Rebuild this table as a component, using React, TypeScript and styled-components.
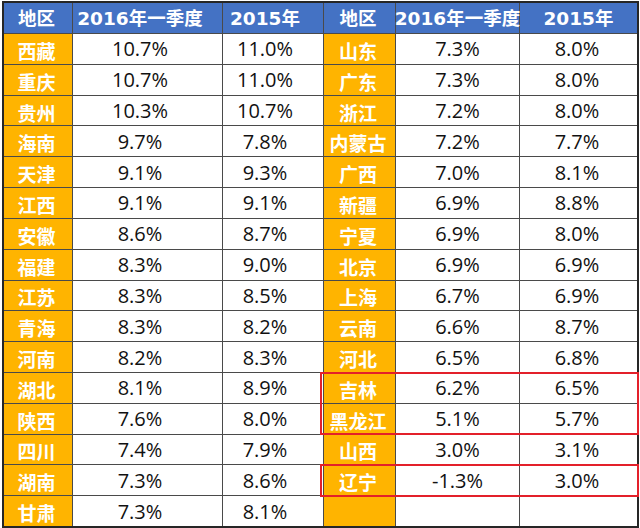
import React from "react";
import styled, { createGlobalStyle } from "styled-components";

const Global = createGlobalStyle`
  html, body { margin: 0; padding: 0; background: #ffffff; }
  body { width: 640px; height: 528px; overflow: hidden; }
`;

const Page = styled.div`
  padding: 1px 1px 0 2px;
`;

const Stack = styled.div`
  display: grid;
  width: max-content;
  & > * {
    grid-area: 1 / 1;
  }
`;

const Sheet = styled.div`
  display: grid;
  grid-template-columns: 68px 149px 100px 71px 123px 117px;
  grid-template-rows: 30px repeat(16, 1fr);
  gap: 1px;
  width: 633px;
  height: 523px;
  background: #4a4a4a;
  border: 2px solid #262626;
`;

const Marks = styled(Sheet)`
  background: transparent;
  border-color: transparent;
  pointer-events: none;
`;

const HeadCell = styled.div<{ $shift?: number }>`
  display: flex;
  align-items: center;
  justify-content: center;
  padding: 2px ${(p) => p.$shift ?? 0}px 0 0;
  background: #4472c4;
  color: #ffffff;
  font-family: "DejaVu Sans", "Noto Sans CJK SC", sans-serif;
  font-weight: 700;
  font-size: 18.5px;
  line-height: 1;
  white-space: nowrap;
`;

const RegionCell = styled.div<{ $shift?: number }>`
  display: flex;
  align-items: center;
  justify-content: center;
  padding: 3px ${(p) => p.$shift ?? 0}px 0 0;
  background: #ffb400;
  color: #ffffff;
  font-family: "Noto Sans CJK SC", sans-serif;
  font-weight: 700;
  font-size: 19px;
  line-height: 1;
  white-space: nowrap;
`;

const ValueCell = styled.div<{ $shift?: number }>`
  display: flex;
  align-items: center;
  justify-content: center;
  padding: 0 ${(p) => p.$shift ?? 0}px 0 0;
  background: #ffffff;
  color: #111111;
  font-family: "Open Sans", "Liberation Sans", sans-serif;
  font-size: 20px;
  white-space: nowrap;
`;

const Highlight = styled.div<{ $from: number; $to: number; $bottom?: number }>`
  grid-column: 4 / 7;
  grid-row: ${(p) => p.$from} / ${(p) => p.$to};
  margin: -1px -2px ${(p) => p.$bottom ?? -1}px -4px;
  border: 2px solid #e3202a;
`;

type Row = [string, string, string];

const left: Row[] = [
  ["西藏", "10.7%", "11.0%"],
  ["重庆", "10.7%", "11.0%"],
  ["贵州", "10.3%", "10.7%"],
  ["海南", "9.7%", "7.8%"],
  ["天津", "9.1%", "9.3%"],
  ["江西", "9.1%", "9.1%"],
  ["安徽", "8.6%", "8.7%"],
  ["福建", "8.3%", "9.0%"],
  ["江苏", "8.3%", "8.5%"],
  ["青海", "8.3%", "8.2%"],
  ["河南", "8.2%", "8.3%"],
  ["湖北", "8.1%", "8.9%"],
  ["陕西", "7.6%", "8.0%"],
  ["四川", "7.4%", "7.9%"],
  ["湖南", "7.3%", "8.6%"],
  ["甘肃", "7.3%", "8.1%"],
];

const right: Row[] = [
  ["山东", "7.3%", "8.0%"],
  ["广东", "7.3%", "8.0%"],
  ["浙江", "7.2%", "8.0%"],
  ["内蒙古", "7.2%", "7.7%"],
  ["广西", "7.0%", "8.1%"],
  ["新疆", "6.9%", "8.8%"],
  ["宁夏", "6.9%", "8.0%"],
  ["北京", "6.9%", "6.9%"],
  ["上海", "6.7%", "6.9%"],
  ["云南", "6.6%", "8.7%"],
  ["河北", "6.5%", "6.8%"],
  ["吉林", "6.2%", "6.5%"],
  ["黑龙江", "5.1%", "5.7%"],
  ["山西", "3.0%", "3.1%"],
  ["辽宁", "-1.3%", "3.0%"],
  ["", "", ""],
];

export default function App() {
  return (
    <>
      <Global />
      <Page>
        <Stack>
          <Sheet>
            <HeadCell $shift={3}>地区</HeadCell>
            <HeadCell $shift={15}>2016年一季度</HeadCell>
            <HeadCell $shift={16}>2015年</HeadCell>
            <HeadCell $shift={3}>地区</HeadCell>
            <HeadCell>2016年一季度</HeadCell>
            <HeadCell>2015年</HeadCell>
            {left.map((l, i) => {
              const r = right[i];
              return (
                <React.Fragment key={i}>
                  <RegionCell $shift={3}>{l[0]}</RegionCell>
                  <ValueCell $shift={15}>{l[1]}</ValueCell>
                  <ValueCell $shift={16}>{l[2]}</ValueCell>
                  <RegionCell $shift={3}>{r[0]}</RegionCell>
                  <ValueCell>{r[1]}</ValueCell>
                  <ValueCell $shift={3}>{r[2]}</ValueCell>
                </React.Fragment>
              );
            })}
          </Sheet>
          <Marks>
            <Highlight $from={13} $to={15} />
            <Highlight $from={16} $to={17} $bottom={-2} />
          </Marks>
        </Stack>
      </Page>
    </>
  );
}
